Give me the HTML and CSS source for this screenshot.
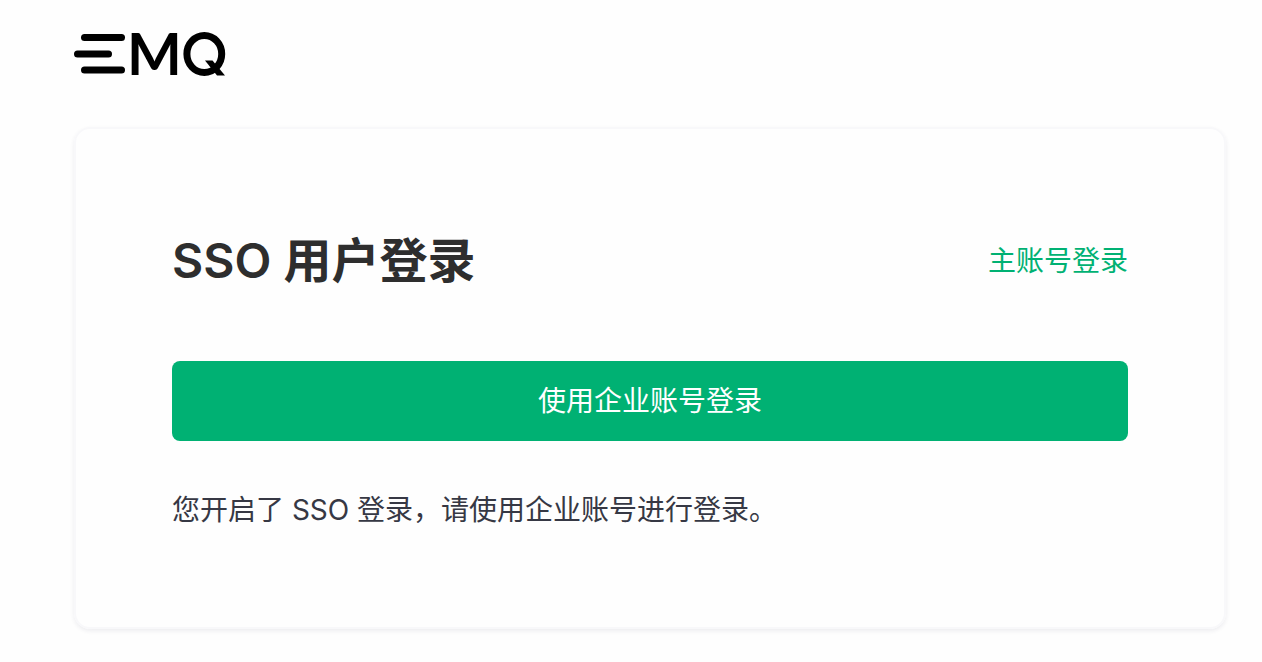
FILE: index.html
```html
<!DOCTYPE html>
<html lang="zh-CN">
<head>
<meta charset="utf-8">
<meta name="viewport" content="width=device-width, initial-scale=1">
<title>SSO 用户登录</title>
<link rel="stylesheet" href="styles.css">
</head>
<body>
<div class="page">
  <header class="header">
    <svg class="logo" viewBox="0 0 152 44" role="img" aria-label="EMQ">
      <g class="logo-bars">
        <rect x="7" y="2" width="44" height="7" rx="3.5"/>
        <rect x="0" y="18.500" width="38" height="7" rx="3.5"/>
        <rect x="7" y="34.500" width="44" height="7" rx="3.5"/>
      </g>
      <text class="logo-letter" x="80.500" y="43" text-anchor="middle">M</text>
      <ellipse class="logo-ring" cx="130.300" cy="22" rx="17.400" ry="18.500"/>
      <polygon points="131,28.500 138.500,28.500 151,43.500 143,43.500"/>
    </svg>
  </header>
  <main class="card">
    <div class="card-head">
      <h1 class="title">SSO 用户登录</h1>
      <a class="link" href="#">主账号登录</a>
    </div>
    <button class="submit" type="button">使用企业账号登录</button>
    <p class="hint">您开启了 SSO 登录，请使用企业账号进行登录。</p>
  </main>
</div>
</body>
</html>
```
FILE: styles.css
```css
* {
  box-sizing: border-box;
}

body {
  margin: 0;
  background: #fefefe;
  color: #363844;
  font-family: Inter, "Noto Sans CJK SC", sans-serif;
  font-size: 28px;
  line-height: 42px;
}

.page {
  padding: 32px 36px 32px 74px;
}

.header {
  display: flex;
  margin-bottom: 51px;
}

.logo {
  display: block;
  width: 152px;
  height: 44px;
  overflow: visible;
}

.logo-letter {
  font-family: Lato, sans-serif;
  font-size: 58px;
  font-weight: 700;
}

.logo-ring {
  fill: none;
  stroke: #000;
  stroke-width: 7;
}

.card {
  padding: 96px;
  border: 2px solid #f8f8fa;
  border-radius: 16px;
  box-shadow: 0 2px 4px rgba(40, 40, 80, 0.08);
}

.card-head {
  display: flex;
  align-items: center;
  justify-content: space-between;
  gap: 24px;
  margin-bottom: 64px;
}

.title {
  margin: 0;
  color: #2e2e2e;
  font-size: 48px;
  font-weight: 600;
  line-height: 72px;
}

.link {
  color: #00b173;
  text-decoration: none;
}

.submit {
  display: block;
  width: 100%;
  height: 80px;
  margin-bottom: 48px;
  padding: 0 24px;
  border: 0;
  border-radius: 8px;
  background: #00b173;
  color: #fff;
  font: inherit;
}

.hint {
  margin: 0;
}
```
